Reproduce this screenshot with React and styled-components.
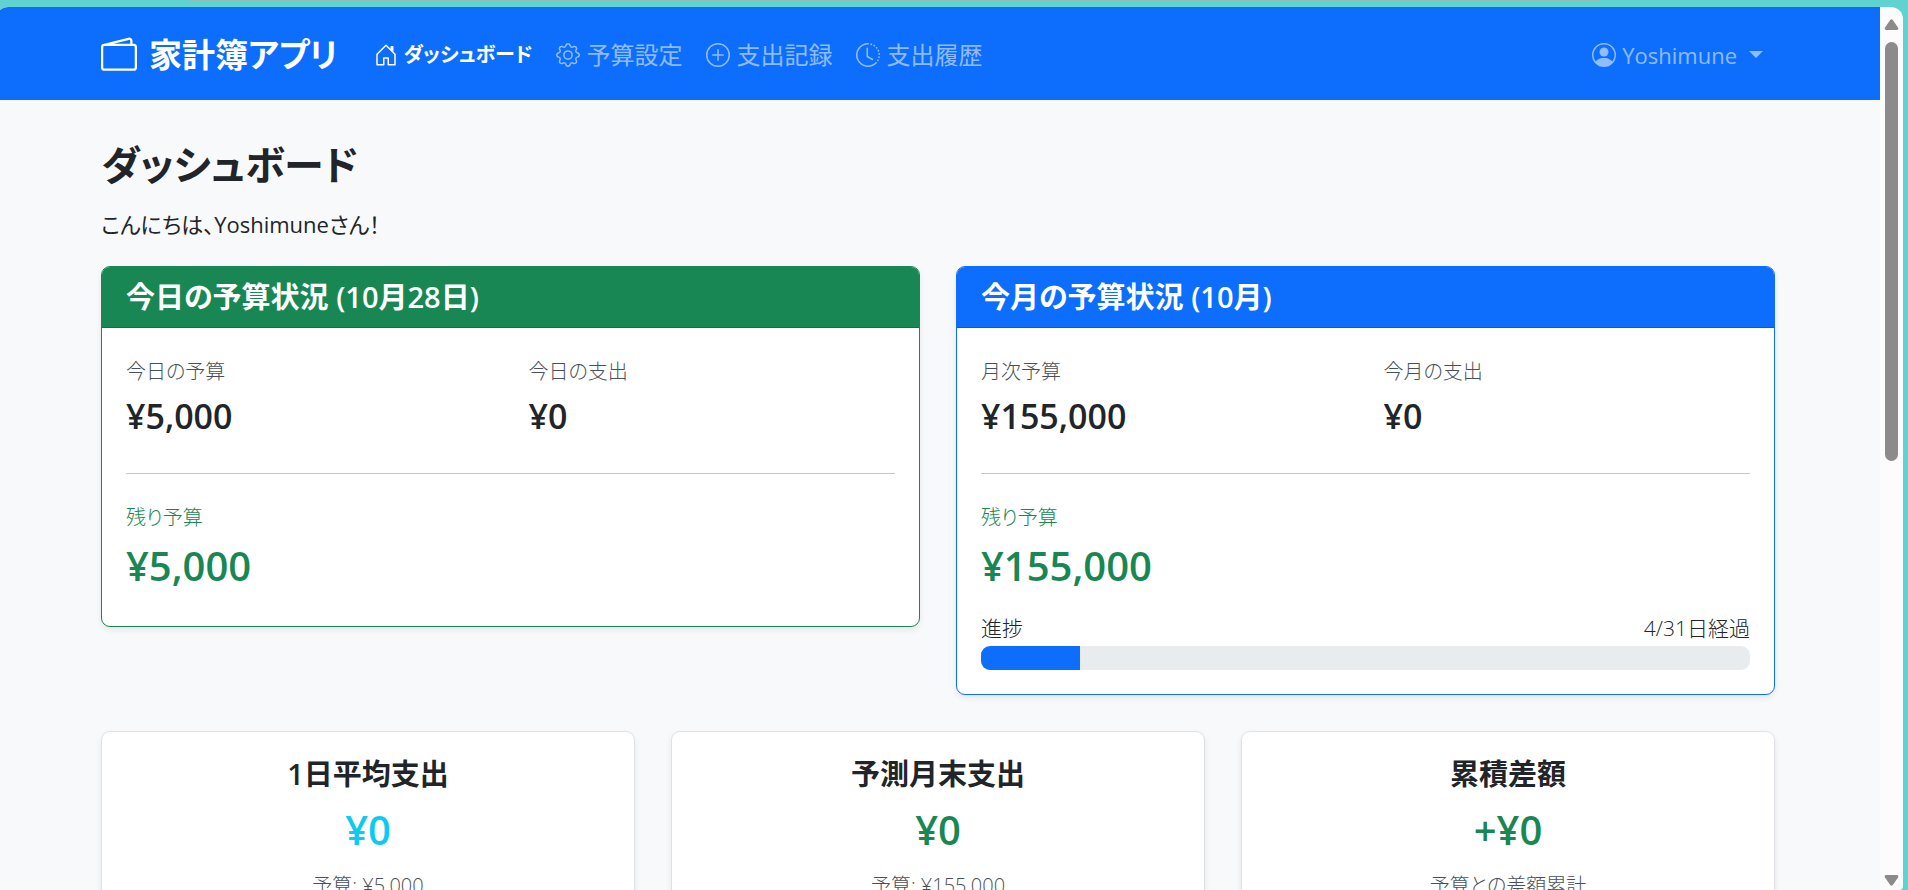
import styled, { createGlobalStyle } from 'styled-components';
import {
  BsWallet2,
  BsHouseDoor,
  BsGear,
  BsPlusCircle,
  BsClockHistory,
  BsPersonCircle,
} from 'react-icons/bs';

const GlobalStyle = createGlobalStyle`
  * {
    box-sizing: border-box;
  }

  body {
    margin: 0;
    overflow: hidden;
    background-color: #60d2d0;
    color: #212529;
    font-family: 'Open Sans', 'Noto Sans CJK JP', sans-serif;
    font-size: 24px;
    line-height: 36px;
    font-feature-settings: 'palt';
  }

  h1, h2, h3, p {
    margin: 0;
    font-weight: 600;
  }
`;

const Desktop = styled.div`
  display: flex;
  flex-direction: column;
  height: 100vh;
  padding-right: 5px;
`;

// lower edge of the browser's toolbar
const ToolbarEdge = styled.div`
  height: 1px;
  margin: 0 16% 6px 10%;
  background-color: #8cbdba;
`;

const BrowserWindow = styled.div`
  display: flex;
  flex: 1;
  min-height: 0;
  margin-left: -4px;
  border-radius: 12px 12px 4px 0;
  overflow: hidden;
  background-color: #fcfcfc;
`;

const Page = styled.div`
  flex: 1;
  min-width: 0;
  overflow: hidden;
  background-color: #f8f9fa;
`;

const Container = styled.div`
  width: 100%;
  max-width: 1710px;
  margin: 0 auto;
  padding: 0 18px;
`;

const Navbar = styled.nav`
  padding: 13px 0 11px;
  background-color: #0d6efd;
`;

const NavInner = styled(Container)`
  display: flex;
  align-items: center;
`;

const Brand = styled.a`
  display: flex;
  align-items: center;
  gap: 12px;
  margin-right: 24px;
  padding: 8px 0;
  color: #fff;
  font-size: 33px;
  font-weight: 700;
  line-height: 53px;
  text-decoration: none;

  svg {
    width: 36px;
    height: 36px;
  }
`;

const NavList = styled.ul`
  display: flex;
  flex: 1;
  margin: 0;
  padding: 0;
  list-style: none;
`;

const NavLink = styled.a`
  display: flex;
  align-items: center;
  gap: 6px;
  padding: 12px;
  color: ${props => (props.$active ? '#fff' : 'rgba(255, 255, 255, 0.55)')};
  font-size: ${props => (props.$active ? '20px' : '24px')};
  font-weight: ${props => (props.$active ? 700 : 400)};
  text-decoration: none;

  svg {
    width: 24px;
    height: 24px;
  }
`;

const UserButton = styled.button`
  display: flex;
  align-items: center;
  gap: 6px;
  padding: 12px;
  border: 0;
  background: none;
  color: rgba(255, 255, 255, 0.55);
  font: inherit;
  font-size: 22px;
  cursor: pointer;

  svg {
    width: 24px;
    height: 24px;
  }

  &::after {
    content: '';
    margin-left: 6px;
    border-top: 7px solid;
    border-right: 7px solid transparent;
    border-left: 7px solid transparent;
  }
`;

const Main = styled(Container)`
  padding-top: 36px;
`;

const PageTitle = styled.h1`
  margin-bottom: 12px;
  font-size: 40px;
  line-height: 58px;
`;

const Greeting = styled.p`
  margin-bottom: 24px;
  font-size: 22px;
  font-weight: 400;
`;

const Row = styled.div`
  display: grid;
  grid-template-columns: repeat(${props => props.$columns}, 1fr);
  align-items: start;
  gap: 36px;
  margin-bottom: 36px;
`;

const Card = styled.section`
  border: 1px solid ${props => props.$color || '#dee2e6'};
  border-radius: 9px;
  background-color: #fff;
  box-shadow: 0 3px 6px rgba(0, 0, 0, 0.075);
  text-align: ${props => (props.$centered ? 'center' : 'left')};
  overflow: hidden;
`;

const CardHeader = styled.div`
  padding: 12px 24px;
  border-bottom: 1px solid rgba(0, 0, 0, 0.18);
  background-color: ${props => props.$color};
  color: #fff;
`;

const CardBody = styled.div`
  padding: 24px;
`;

const CardTitle = styled.h2`
  margin-bottom: ${props => (props.$spaced ? '12px' : 0)};
  font-size: 29px;
  line-height: 36px;
`;

const Split = styled.div`
  display: grid;
  grid-template-columns: 1fr 1fr;
  gap: 36px;
`;

const Label = styled.p`
  padding-bottom: 2px;
  color: ${props => props.$color || '#495057'};
  font-size: 20px;
  font-weight: 300;
  line-height: 40px;
`;

const Amount = styled.h3`
  margin-bottom: 10px;
  color: ${props => props.$color || 'inherit'};
  font-size: ${props => (props.$large ? '40px' : '34px')};
  line-height: ${props => (props.$large ? '52px' : '45px')};
`;

const Divider = styled.hr`
  margin: 24px 0;
  border: 0;
  border-top: 1px solid #c7c8c9;
`;

const ProgressLabel = styled.div`
  display: flex;
  justify-content: space-between;
  padding-top: 8px;
  font-size: 21px;
  font-weight: 300;
`;

const ProgressTrack = styled.div`
  height: 24px;
  border-radius: 9px;
  background-color: #e9ecef;
  overflow: hidden;
`;

const ProgressBar = styled.div`
  height: 100%;
  background-color: #0d6efd;
`;

const Scrollbar = styled.div`
  display: flex;
  flex-direction: column;
  align-items: center;
  width: 23px;
  padding: 12px 0 4px;
`;

const ScrollTrack = styled.div`
  flex: 1;
  padding: 12px 0;
`;

const ScrollThumb = styled.div`
  width: 13px;
  height: 51%;
  border-radius: 7px;
  background-color: #8b8b8b;
`;

const ScrollButton = styled.button`
  display: flex;
  padding: 0;
  border: 0;
  background: none;
  color: #8b8b8b;
`;

const GREEN = '#198754';
const BLUE = '#0d6efd';
const CYAN = '#0dcaf0';

const navItems = [
  { label: 'ダッシュボード', icon: BsHouseDoor, active: true },
  { label: '予算設定', icon: BsGear },
  { label: '支出記録', icon: BsPlusCircle },
  { label: '支出履歴', icon: BsClockHistory },
];

const stats = [
  { title: '1日平均支出', value: '¥0', note: '予算: ¥5,000', color: CYAN },
  { title: '予測月末支出', value: '¥0', note: '予算: ¥155,000', color: GREEN },
  { title: '累積差額', value: '+¥0', note: '予算との差額累計', color: GREEN },
];

const elapsedDays = 4;
const daysInMonth = 31;

const Arrow = ({ down }) => (
  <svg width="15" height="11" viewBox="0 0 15 11" fill="currentColor" aria-hidden="true">
    <path
      d="M6.2 1Q7.5-.6 8.8 1L14 8.6Q15 11 12.8 11H2.2Q0 11 1 8.6Z"
      transform={down ? 'rotate(180 7.5 5.5)' : undefined}
    />
  </svg>
);

const Header = () => (
  <Navbar>
    <NavInner>
      <Brand href="#">
        <BsWallet2 />
        家計簿アプリ
      </Brand>
      <NavList>
        {navItems.map(({ label, icon: Icon, active }) => (
          <li key={label}>
            <NavLink href="#" $active={active}>
              <Icon />
              {label}
            </NavLink>
          </li>
        ))}
      </NavList>
      <UserButton type="button">
        <BsPersonCircle />
        Yoshimune
      </UserButton>
    </NavInner>
  </Navbar>
);

const BudgetCard = ({ title, color, budgetLabel, budget, spentLabel, spent, remaining, children }) => (
  <Card $color={color}>
    <CardHeader $color={color}>
      <CardTitle>{title}</CardTitle>
    </CardHeader>
    <CardBody>
      <Split>
        <div>
          <Label>{budgetLabel}</Label>
          <Amount>{budget}</Amount>
        </div>
        <div>
          <Label>{spentLabel}</Label>
          <Amount>{spent}</Amount>
        </div>
      </Split>
      <Divider />
      <Label $color={GREEN}>残り予算</Label>
      <Amount $large $color={GREEN}>{remaining}</Amount>
      {children}
    </CardBody>
  </Card>
);

const App = () => {
  const progress = (elapsedDays / daysInMonth) * 100;

  return (
    <Desktop>
      <GlobalStyle />
      <ToolbarEdge />
      <BrowserWindow>
        <Page>
          <Header />
          <Main as="main">
            <PageTitle>ダッシュボード</PageTitle>
            <Greeting>こんにちは、Yoshimuneさん！</Greeting>

            <Row $columns={2}>
              <BudgetCard
                title="今日の予算状況 (10月28日)"
                color={GREEN}
                budgetLabel="今日の予算"
                budget="¥5,000"
                spentLabel="今日の支出"
                spent="¥0"
                remaining="¥5,000"
              />
              <BudgetCard
                title="今月の予算状況 (10月)"
                color={BLUE}
                budgetLabel="月次予算"
                budget="¥155,000"
                spentLabel="今月の支出"
                spent="¥0"
                remaining="¥155,000"
              >
                <ProgressLabel>
                  <span>進捗</span>
                  <span>{elapsedDays}/{daysInMonth}日経過</span>
                </ProgressLabel>
                <ProgressTrack>
                  <ProgressBar style={{ width: `${progress}%` }} />
                </ProgressTrack>
              </BudgetCard>
            </Row>

            <Row $columns={3}>
              {stats.map(stat => (
                <Card key={stat.title} $centered>
                  <CardBody>
                    <CardTitle $spaced>{stat.title}</CardTitle>
                    <Amount $large $color={stat.color}>{stat.value}</Amount>
                    <Label>{stat.note}</Label>
                  </CardBody>
                </Card>
              ))}
            </Row>
          </Main>
        </Page>
        <Scrollbar>
          <ScrollButton type="button" aria-label="上へスクロール">
            <Arrow />
          </ScrollButton>
          <ScrollTrack>
            <ScrollThumb />
          </ScrollTrack>
          <ScrollButton type="button" aria-label="下へスクロール">
            <Arrow down />
          </ScrollButton>
        </Scrollbar>
      </BrowserWindow>
    </Desktop>
  );
};

export default App;
